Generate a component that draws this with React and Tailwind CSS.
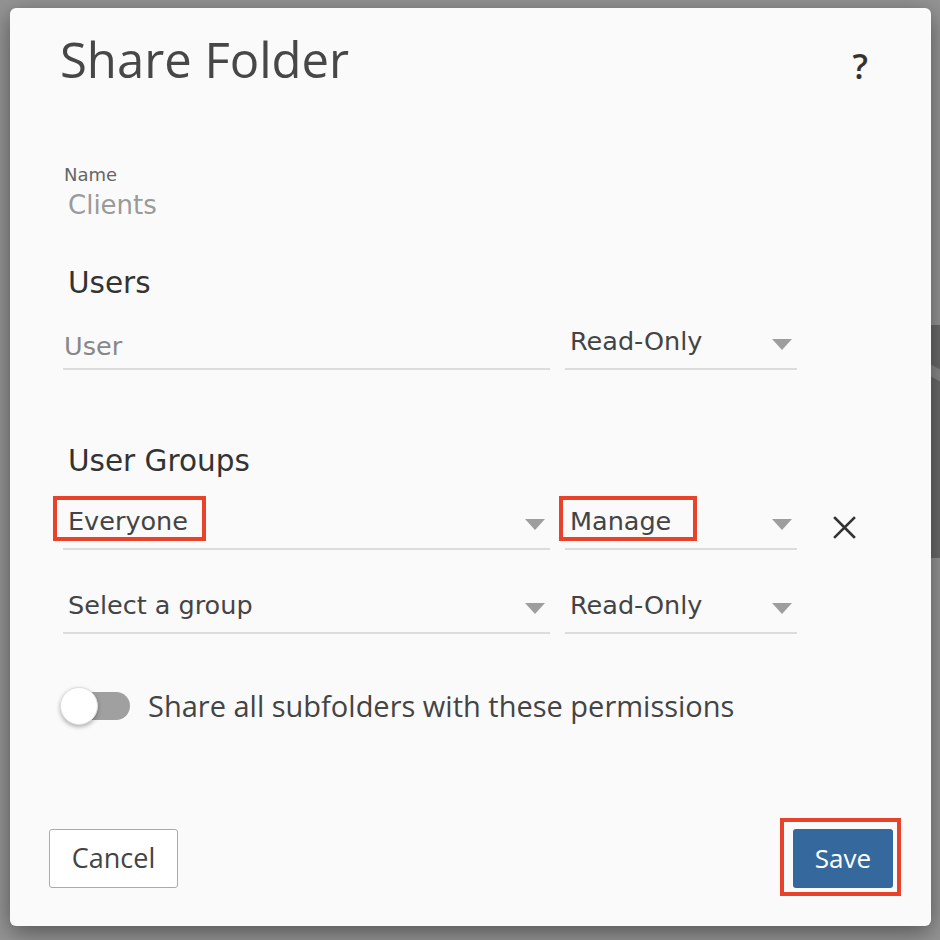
import React from 'react';

const OPEN = { fontFamily: '"Open Sans", "Noto Sans", sans-serif' };
const FIELD = { fontFamily: '"DejaVu Sans", "Noto Sans", sans-serif' };

const Caret = () => (
  <svg width="20" height="11" viewBox="0 0 20 11" className="shrink-0">
    <path d="M0 0 L20 0 L10 11 Z" fill="#9e9e9e" />
  </svg>
);

const Select = ({ value, width, flag, flagClass }) => (
  <div className={`relative flex items-center justify-between pl-[5px] pr-[5px] pb-[12px] border-b-2 border-[#dcdcdc] ${width}`}>
    <span className="text-[25.5px] leading-[30px] text-[#444]" style={FIELD}>{value}</span>
    <span className="mt-[6px]"><Caret /></span>
    {flag && <div className={`absolute top-[-10px] h-[45px] border-[4px] border-[#e8432a] ${flagClass}`} />}
  </div>
);

export default function App() {
  return (
    <div className="relative w-[940px] h-[940px] bg-[#959595] overflow-hidden pt-[8px] pl-[10px]">
      {/* bit of the page behind the dialog */}
      <div className="absolute right-0 top-[325px] w-[9px] h-[233px] bg-[#6b6b6b]" />
      <div className="absolute right-0 top-[367px] w-[9px] h-[12px] bg-[#8a8a8a] skew-y-[30deg]" />

      <div className="relative flex flex-col w-[921px] h-[918px] bg-[#fafafa] rounded-[6px] shadow-[0_6px_24px_rgba(0,0,0,0.45)]">
        {/* Header */}
        <div className="flex items-start justify-between pl-[50px] pr-[63px] pt-[19px]">
          <h1 className="text-[49px] leading-[64px] text-[#474747]" style={OPEN}>Share Folder</h1>
          <span className="mt-[22px] text-[34px] leading-[34px] font-semibold text-[#333]" style={OPEN}>?</span>
        </div>

        {/* Form */}
        <div className="pl-[53px] flex flex-col">
          <div className="mt-[74px] pl-[1px] text-[18px] leading-[20px] text-[#666]" style={FIELD}>Name</div>
          <div className="mt-[5px] pl-[5px] text-[26px] leading-[30px] text-[#9a9a9a]" style={FIELD}>Clients</div>

          <div className="mt-[46px] pl-[5px] text-[29.5px] leading-[34px] text-[#333]" style={FIELD}>Users</div>
          <div className="mt-[26px] flex items-end gap-[15px]">
            <div className="w-[487px] pl-[1px] pb-[7px] border-b-2 border-[#dcdcdc]">
              <span className="text-[25.5px] leading-[30px] text-[#888]" style={FIELD}>User</span>
            </div>
            <Select value="Read-Only" width="w-[232px]" />
          </div>

          <div className="mt-[74px] pl-[5px] text-[29.5px] leading-[34px] text-[#333]" style={FIELD}>User Groups</div>
          <div className="mt-[28px] flex items-end gap-[15px]">
            <Select value="Everyone" width="w-[487px]" flag flagClass="left-[-10px] w-[153px]" />
            <Select value="Manage" width="w-[232px]" flag flagClass="left-[-6px] w-[138px]" />
            <svg width="23" height="23" viewBox="0 0 23 23" className="ml-[21px] mb-[11px]">
              <path d="M2 2 L21 21 M21 2 L2 21" stroke="#333" strokeWidth="2.6" strokeLinecap="square" />
            </svg>
          </div>
          <div className="mt-[40px] flex items-end gap-[15px]">
            <Select value="Select a group" width="w-[487px]" />
            <Select value="Read-Only" width="w-[232px]" />
          </div>

          {/* Toggle */}
          <div className="mt-[52px] h-[40px] flex items-center">
            <div className="relative ml-[-3px] w-[70px] h-[40px] flex items-center">
              <div className="ml-[2px] w-[68px] h-[28px] rounded-full bg-[#a0a0a0]" />
              <div className="absolute left-0 top-[1px] w-[38px] h-[38px] rounded-full bg-white border border-[#e0e0e0] shadow-[0_2px_4px_rgba(0,0,0,0.3)]" />
            </div>
            <span className="ml-[18px] text-[29px] leading-[40px] text-[#444]" style={OPEN}>
              Share all subfolders with these permissions
            </span>
          </div>
        </div>

        {/* Footer */}
        <div className="mt-auto flex items-center justify-between pl-[39px] pr-[38px] pb-[38px]">
          <button className="w-[129px] h-[59px] bg-white border-[1.5px] border-[#aaa] rounded-[3px] text-[27px] text-[#444]" style={OPEN}>
            Cancel
          </button>
          <div className="relative">
            <button className="w-[100px] h-[59px] bg-[#35699d] rounded-[3px] text-[26px] text-white" style={OPEN}>
              Save
            </button>
            <div className="absolute left-[-13px] top-[-11px] right-[-8px] bottom-[-8px] border-[4px] border-[#e8432a]" />
          </div>
        </div>
      </div>
    </div>
  );
}
